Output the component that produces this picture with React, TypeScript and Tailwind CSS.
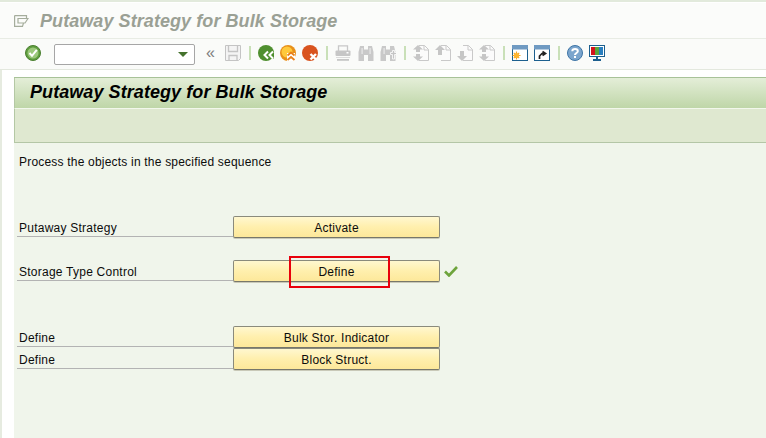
const sans = '[font-family:"Liberation_Sans",Arial,sans-serif]';

function Sep() {
  return <div className="w-[2px] h-[14px] bg-[#c9e0b8]" />;
}

function OkIcon() {
  return (
    <svg width="16" height="16" viewBox="0 0 16 16">
      <circle cx="8" cy="8" r="7.500" fill="#5f9e3f" stroke="#4a7f30" />
      <circle cx="8" cy="8" r="5.500" fill="#9cc87c" />
      <path d="M4.500 8l2.500 2.800L11.800 4.800" fill="none" stroke="#fff" strokeWidth="2" />
    </svg>
  );
}

function SaveIcon() {
  return (
    <svg width="16" height="16" viewBox="0 0 16 16" fill="none" stroke="#c4c4c4">
      <path d="M.5.5h15v13l-2 2H.5z" fill="#f4f4f4" />
      <path d="M3.500 1v5.500h9V1" strokeWidth="1.300" />
      <path d="M4 15.500v-5h8v5" strokeWidth="1.300" />
    </svg>
  );
}

function NavIcon({ color, inner, children }: { color: string; inner?: string; children: React.ReactNode }) {
  return (
    <svg width="16" height="16" viewBox="0 0 16 16">
      <circle cx="8" cy="8" r="8" fill={color} />
      {inner && <circle cx="7" cy="7" r="5.500" fill={inner} />}
      {children}
    </svg>
  );
}

function Printer() {
  return (
    <svg width="16" height="16" viewBox="0 0 16 16" fill="none">
      <path d="M3.500 6V.8h9V6" stroke="#c8c8c8" strokeWidth="1.300" />
      <rect x=".5" y="5.500" width="15" height="5.500" rx="1" fill="#c6c6c6" />
      <rect x="11.500" y="7" width="2" height="1.500" fill="#fff" />
      <rect x="1" y="12" width="14" height="1" fill="#dcdcdc" />
      <rect x="2" y="14" width="12" height="1.800" fill="#c6c6c6" />
    </svg>
  );
}

function Binoculars({ plus }: { plus?: boolean }) {
  return (
    <svg width="16" height="16" viewBox="0 0 16 16">
      <path d="M2 1h4v3.500h4V1h4l1.500 6v9h-5.500v-6H6v6H.5V7z" fill="#c9c9c9" />
      <rect x="3.500" y="3" width="1.200" height="6" fill="#e9e9e9" />
      <rect x="11.500" y="3" width="1.200" height="6" fill={plus ? '#c9c9c9' : '#e9e9e9'} />
      {plus && <path d="M10.500 7.500h2v-2h2v2h2v2h-2V14h-2V9.500h-2z" fill="#c4c4c4" stroke="#fff" strokeWidth=".8" />}
    </svg>
  );
}

function PageArrow({ kind }: { kind: 'first' | 'prev' | 'next' | 'last' }) {
  return (
    <svg width="16" height="16" viewBox="0 0 16 16">
      <path d="M6 .5h5.500l4 4v11H6" fill="#fbfbfb" stroke="#c9c9c9" />
      <path d="M11 .5V5h4.500" fill="none" stroke="#c9c9c9" />
      {(kind === 'first' || kind === 'last') && (
        <g fill="#c6c6c6">
          <path d="M5 0l5 4.500H7V7H3V4.500H0z" />
          <path d="M5 16l5-4.500H7V9H3v2.500H0z" />
        </g>
      )}
      {kind === 'prev' && <path d="M5 0l5 5H7v5H3V5H0z" fill="#c6c6c6" />}
      {kind === 'next' && <path d="M5 16l5-5H7V6H3v5H0z" fill="#c6c6c6" />}
    </svg>
  );
}

function WindowIcon({ children }: { children: React.ReactNode }) {
  return (
    <svg width="16" height="16" viewBox="0 0 16 16">
      <rect x=".5" y=".5" width="15" height="15" fill="#fff" stroke="#1c5f8e" />
      <rect x="0" y="0" width="16" height="4.500" fill="#6f9ac2" />
      {children}
    </svg>
  );
}

function HelpIcon() {
  return (
    <svg width="16" height="16" viewBox="0 0 16 16">
      <circle cx="8" cy="8" r="7.500" fill="#7ba5cd" stroke="#3e75a6" />
      <path d="M5.300 6.200C5.300 3.200 10.800 3.200 10.800 6.200 10.800 8 8 8 8 10" fill="none" stroke="#fff" strokeWidth="2" />
      <rect x="7" y="11" width="2" height="2" fill="#fff" />
    </svg>
  );
}

function MonitorIcon() {
  return (
    <svg width="16" height="16" viewBox="0 0 16 16">
      <rect x=".5" y=".5" width="15" height="11" fill="#fff" stroke="#1c5f8e" />
      <rect x="2" y="2" width="4" height="8" fill="#d4121a" />
      <rect x="6" y="2" width="4" height="8" fill="#5aa53a" />
      <rect x="10" y="2" width="4" height="8" fill="#2a7fc0" />
      <rect x="7" y="12" width="2" height="2" fill="#1c5f8e" />
      <rect x="4" y="14" width="8" height="2" fill="#1c5f8e" />
    </svg>
  );
}

function Row({ label, action, className, children }: { label: string; action: string; className: string; children?: React.ReactNode }) {
  return (
    <div className={`flex items-end h-[22px] pl-[3px] ${className}`}>
      <div className="w-[216px] h-[21px] mb-[1px] border-b border-[#b3b3b3] pl-[2px] text-[12px] leading-[25px] tracking-[0.24px] text-[#0c0c0c]">
        {label}
      </div>
      <button className="w-[207px] h-[22px] pt-[2px] rounded-[2px] border border-[#8a8a7c] border-b-[#77776a] bg-gradient-to-b from-[#fff7cf] via-[#ffefad] to-[#fde89a] text-center text-[12px] leading-[18px] tracking-[0.24px] text-[#0c0c0c] shadow-[0_1px_0_#c9c9b8]">
        {action}
      </button>
      {children}
    </div>
  );
}

export default function App() {
  return (
    <div className={`w-[766px] h-[438px] overflow-hidden bg-white flex flex-col ${sans}`}>
      <div className="h-[3px] bg-[#e2eadc] border-b border-white" />
      <div className="h-[36px] flex items-center pl-[14px] gap-[11px] bg-[#fbfcfa] border-b border-[#e8ece4]">
        <svg width="15" height="12" viewBox="0 0 15 12" fill="none" stroke="#a5ad9c" strokeWidth="1.200">
          <path d="M.6.6H12.500V3.500M.6.600V11.400H8.500L9.500 8" />
          <path d="M4 3.500H14L11 8H4z" />
        </svg>
        <h1 className="text-[18px] leading-[24px] font-bold italic tracking-[0.07px] text-[#9aa094]">
          Putaway Strategy for Bulk Storage
        </h1>
      </div>
      <div className="h-[30px] flex items-center pl-[25px] pb-[2px] bg-[#fafbf9]">
        <OkIcon />
        <div className="ml-[13px] mt-[2px] w-[141px] h-[21px] rounded-[2px] border border-[#a6a6a6] bg-white flex items-center justify-end pr-[6px]">
          <span className="w-0 h-0 border-x-[5px] border-x-transparent border-t-[5px] border-t-[#44722d]" />
        </div>
        <span className="ml-[11px] w-[9px] text-[#7d7d7d] text-[16px] leading-[16px]">«</span>
        <div className="ml-[10px]"><SaveIcon /></div>
        <div className="ml-[8px]"><Sep /></div>
        <div className="ml-[7px]">
          <NavIcon color="#4f8f2f">
            <path d="M9 6.500l-3.500 3.500L9 13.500h7V6.500z" fill="#4f8f2f" />
            <path d="M10 6.500L6.500 10l3.500 3.500M15 6.500L11.500 10l3.500 3.500" fill="none" stroke="#fff" strokeWidth="2" />
          </NavIcon>
        </div>
        <div className="ml-[6px]">
          <NavIcon color="#e8901a" inner="#ffc93c">
            <path d="M7 8h8v8H7z" fill="#fff" />
            <path d="M7.500 10.500L11 7.500l3.500 3M7.500 15L11 12l3.500 3" fill="none" stroke="#e8801a" strokeWidth="1.800" />
          </NavIcon>
        </div>
        <div className="ml-[6px]">
          <NavIcon color="#d9531e">
            <path d="M8.500 9l5.500 5.500M14 9l-5.500 5.500" fill="none" stroke="#fff" strokeWidth="2.400" />
          </NavIcon>
        </div>
        <div className="ml-[8px]"><Sep /></div>
        <div className="ml-[7px]"><Printer /></div>
        <div className="ml-[7px]"><Binoculars /></div>
        <div className="ml-[6px]"><Binoculars plus /></div>
        <div className="ml-[8px]"><Sep /></div>
        <div className="ml-[7px]"><PageArrow kind="first" /></div>
        <div className="ml-[6px]"><PageArrow kind="prev" /></div>
        <div className="ml-[6px]"><PageArrow kind="next" /></div>
        <div className="ml-[6px]"><PageArrow kind="last" /></div>
        <div className="ml-[8px]"><Sep /></div>
        <div className="ml-[7px]">
          <WindowIcon>
            <path d="M4.500 6.500v8M.5 10.500h8M1.800 7.800l5.400 5.400M7.200 7.800l-5.400 5.400" stroke="#f6a623" strokeWidth="1.200" />
            <circle cx="4.500" cy="10.500" r="2.600" fill="#ffb52e" />
          </WindowIcon>
        </div>
        <div className="ml-[6px]">
          <WindowIcon>
            <path d="M5.500 14v-3L8 8.500H11M8.500 6.500l3 2-3 2" fill="none" stroke="#222" strokeWidth="1.700" />
          </WindowIcon>
        </div>
        <div className="ml-[8px]"><Sep /></div>
        <div className="ml-[7px]"><HelpIcon /></div>
        <div className="ml-[6px]"><MonitorIcon /></div>
      </div>
      <div className="h-[1px] bg-[#e3e8de]" />
      <div className="flex-1 flex">
        <div className="w-[14px] bg-white border-l-[2px] border-[#e6ebe0]" />
        <div className="flex-1 bg-[#f0f5eb] flex flex-col">
          <div className="h-[8px] bg-white border-b border-[#a8c298]" />
          <div className="h-[30px] pl-[15px] border-l border-[#b4c8a4] bg-gradient-to-b from-[#e4eed8] to-[#bfd6a8] text-[18px] leading-[28px] font-bold italic tracking-[0.07px] text-black">
            Putaway Strategy for Bulk Storage
          </div>
          <div className="h-[35px] border-t border-[#f2f7ec] border-b border-l border-b-[#b4c6a6] border-l-[#b4c8a4] bg-[#dfe8d0]" />
          <p className="mt-[11px] pl-[5px] text-[12px] leading-[16px] tracking-[0.2px] text-[#0c0c0c]">
            Process the objects in the specified sequence
          </p>
          <Row label="Putaway Strategy" action="Activate" className="mt-[46px]" />
          <div className="relative">
            <Row label="Storage Type Control" action="Define" className="mt-[22px]">
              <svg className="ml-[4px] mb-[5px]" width="14" height="12" viewBox="0 0 14 12">
                <path d="M1 6.500l4 4 8-8.500" fill="none" stroke="#6ea43c" strokeWidth="2.600" />
              </svg>
            </Row>
            <div className="absolute left-[275px] top-[18px] w-[101px] h-[32px] border-2 border-[#e8000b]" />
          </div>
          <Row label="Define" action="Bulk Stor. Indicator" className="mt-[44px]" />
          <Row label="Define" action="Block Struct." className="" />
        </div>
      </div>
    </div>
  );
}
